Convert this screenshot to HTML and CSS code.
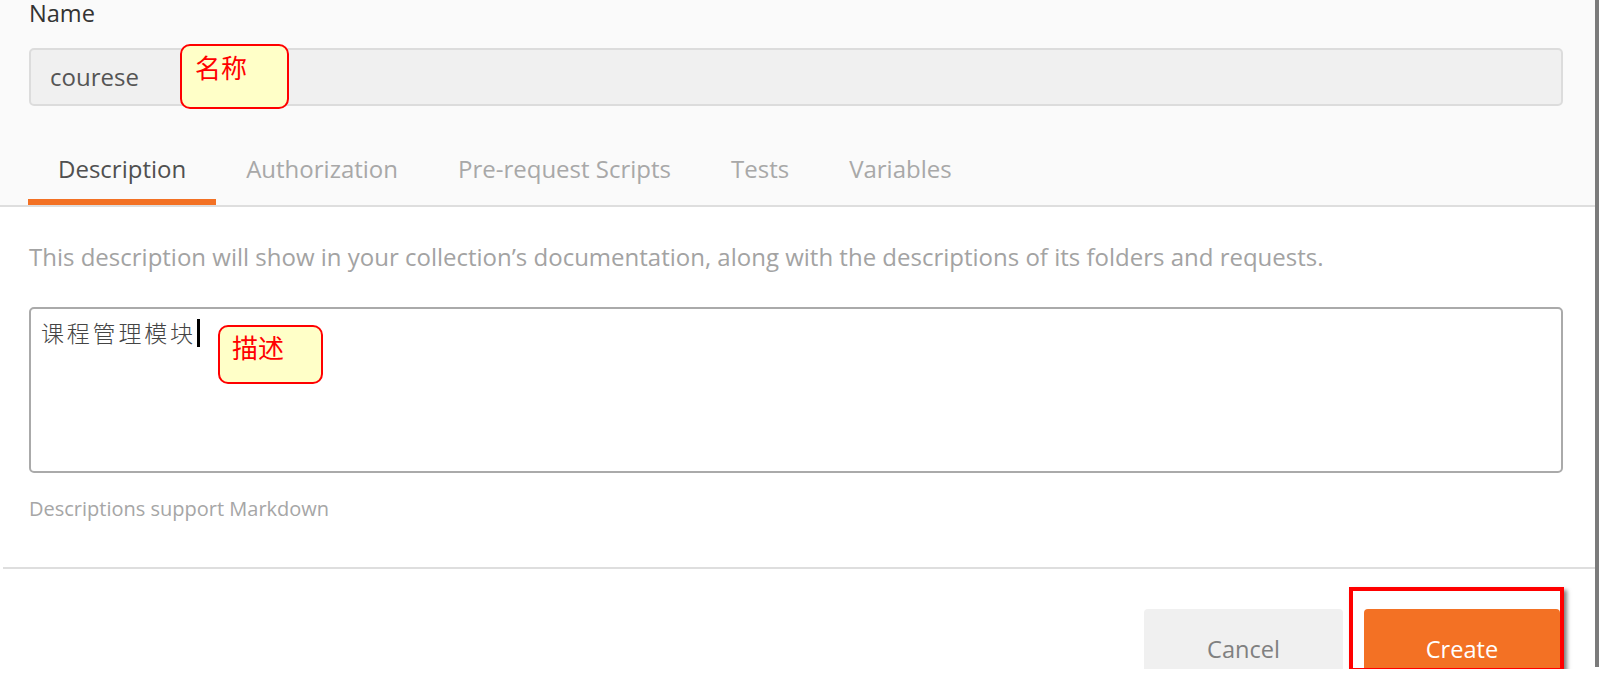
FILE: index.html
```html
<!DOCTYPE html>
<html>
<head>
  <meta charset="utf-8">
  <title>Create a New Collection</title>
  <link rel="stylesheet" href="styles.css">
</head>
<body>
  <div id="page">
    <div id="modal">
      <div class="modal-head">
        <div class="field-label">Name</div>
        <div class="name-input">
          courese
          <div class="note note-name">名称</div>
        </div>
        <div class="tabs">
          <div class="tab active">Description</div>
          <div class="tab">Authorization</div>
          <div class="tab">Pre-request Scripts</div>
          <div class="tab">Tests</div>
          <div class="tab">Variables</div>
        </div>
      </div>

      <div class="modal-body">
        <p class="hint">This description will show in your collection’s documentation, along with the descriptions of its folders and requests.</p>
        <div class="desc-box">
          <span class="desc-text">课程管理模块</span><span class="caret"></span>
          <div class="note note-desc">描述</div>
        </div>
        <p class="md-note">Descriptions support Markdown</p>
      </div>

      <div class="modal-foot">
        <button class="btn btn-cancel">Cancel</button>
        <button class="btn btn-create">Create</button>
      </div>
    </div>
    <div class="edge"></div>

    <!-- red highlight drawn over the Create button -->
    <div class="mark"></div>
  </div>
</body>
</html>
```

FILE: styles.css
```css
body {
  margin: 0;
  font-family: "Open Sans", "Noto Sans", sans-serif;
  background-color: #fff;
}

#page {
  position: relative;
  display: flex;
  height: 669px;
}

#modal {
  flex: 1;
  height: 669px;
  overflow: hidden;
}

.edge {
  width: 4px;
  height: 667px;
  margin-right: 1px;
  background-color: #7b7b7b;
}

/* header: name + tabs */
.modal-head {
  background-color: #fafafa;
  padding: 0 32px 0 29px;
  border-bottom: 2px solid #dedede;
}

.field-label {
  font-size: 23.6px;
  line-height: 26px;
  color: #333;
}

.name-input {
  position: relative;
  margin-top: 22px;
  height: 54px;
  padding: 0 19px;
  border: 2px solid #dcdcdc;
  border-radius: 5px;
  background-color: #f0f0f0;
  font-size: 24px;
  line-height: 54px;
  color: #555;
}

.tabs {
  display: flex;
  margin-top: 50px;
  margin-left: -1px;
}

.tab {
  padding: 0 30px 17px;
  font-size: 24px;
  line-height: 26px;
  color: #a8a8a8;
  border-bottom: 6px solid transparent;
}

.tab.active {
  color: #505050;
  border-bottom-color: #f37124;
}

/* body */
.modal-body {
  padding: 37px 32px 46px 29px;
}

.hint {
  margin: 0;
  font-size: 24px;
  line-height: 26px;
  color: #a3a3a3;
  white-space: nowrap;
}

.desc-box {
  position: relative;
  box-sizing: border-box;
  height: 166px;
  margin-top: 37px;
  padding: 8px 10px;
  border: 2px solid #aaa;
  border-radius: 5px;
}

.desc-text {
  font-family: "Noto Sans CJK SC", sans-serif;
  font-size: 23px;
  font-weight: 300;
  line-height: 30px;
  letter-spacing: 2.8px;
  color: #444;
}

.caret {
  display: inline-block;
  width: 3px;
  height: 28px;
  margin-left: 1px;
  vertical-align: -5px;
  background-color: #000;
}

.md-note {
  margin: 24px 0 0;
  font-size: 20px;
  line-height: 24px;
  color: #a6a6a6;
}

/* footer */
.modal-foot {
  display: flex;
  justify-content: flex-end;
  gap: 21px;
  margin-left: 3px;
  padding: 40px 35px 0 0;
  border-top: 2px solid #dedede;
}

.btn {
  flex-shrink: 0;
  height: 80px;
  border: none;
  border-radius: 4px 4px 0 0;
  font-family: "Open Sans", sans-serif;
  font-size: 23.6px;
}

.btn-cancel {
  width: 199px;
  background-color: #f0f0f0;
  color: #808080;
}

.btn-create {
  width: 196px;
  background-color: #f37124;
  color: #fff;
}

/* annotation callouts */
.note {
  position: absolute;
  box-sizing: border-box;
  border: 2px solid #f00;
  border-radius: 10px;
  background-color: #ffffc8;
  font-family: "Noto Sans CJK SC", sans-serif;
  font-size: 26px;
  line-height: 30px;
  color: #f00;
}

.note-name {
  left: 149px;
  top: -6px;
  width: 109px;
  height: 65px;
  padding: 6px 0 0 13px;
}

.note-desc {
  left: 187px;
  top: 16px;
  width: 105px;
  height: 59px;
  padding: 5px 0 0 12px;
}

.mark {
  position: absolute;
  left: 1349px;
  top: 587px;
  box-sizing: border-box;
  width: 215px;
  height: 85px;
  border: 4px solid #f00;
  box-shadow: 3px 3px 4px rgba(0, 0, 0, 0.5);
}
```
